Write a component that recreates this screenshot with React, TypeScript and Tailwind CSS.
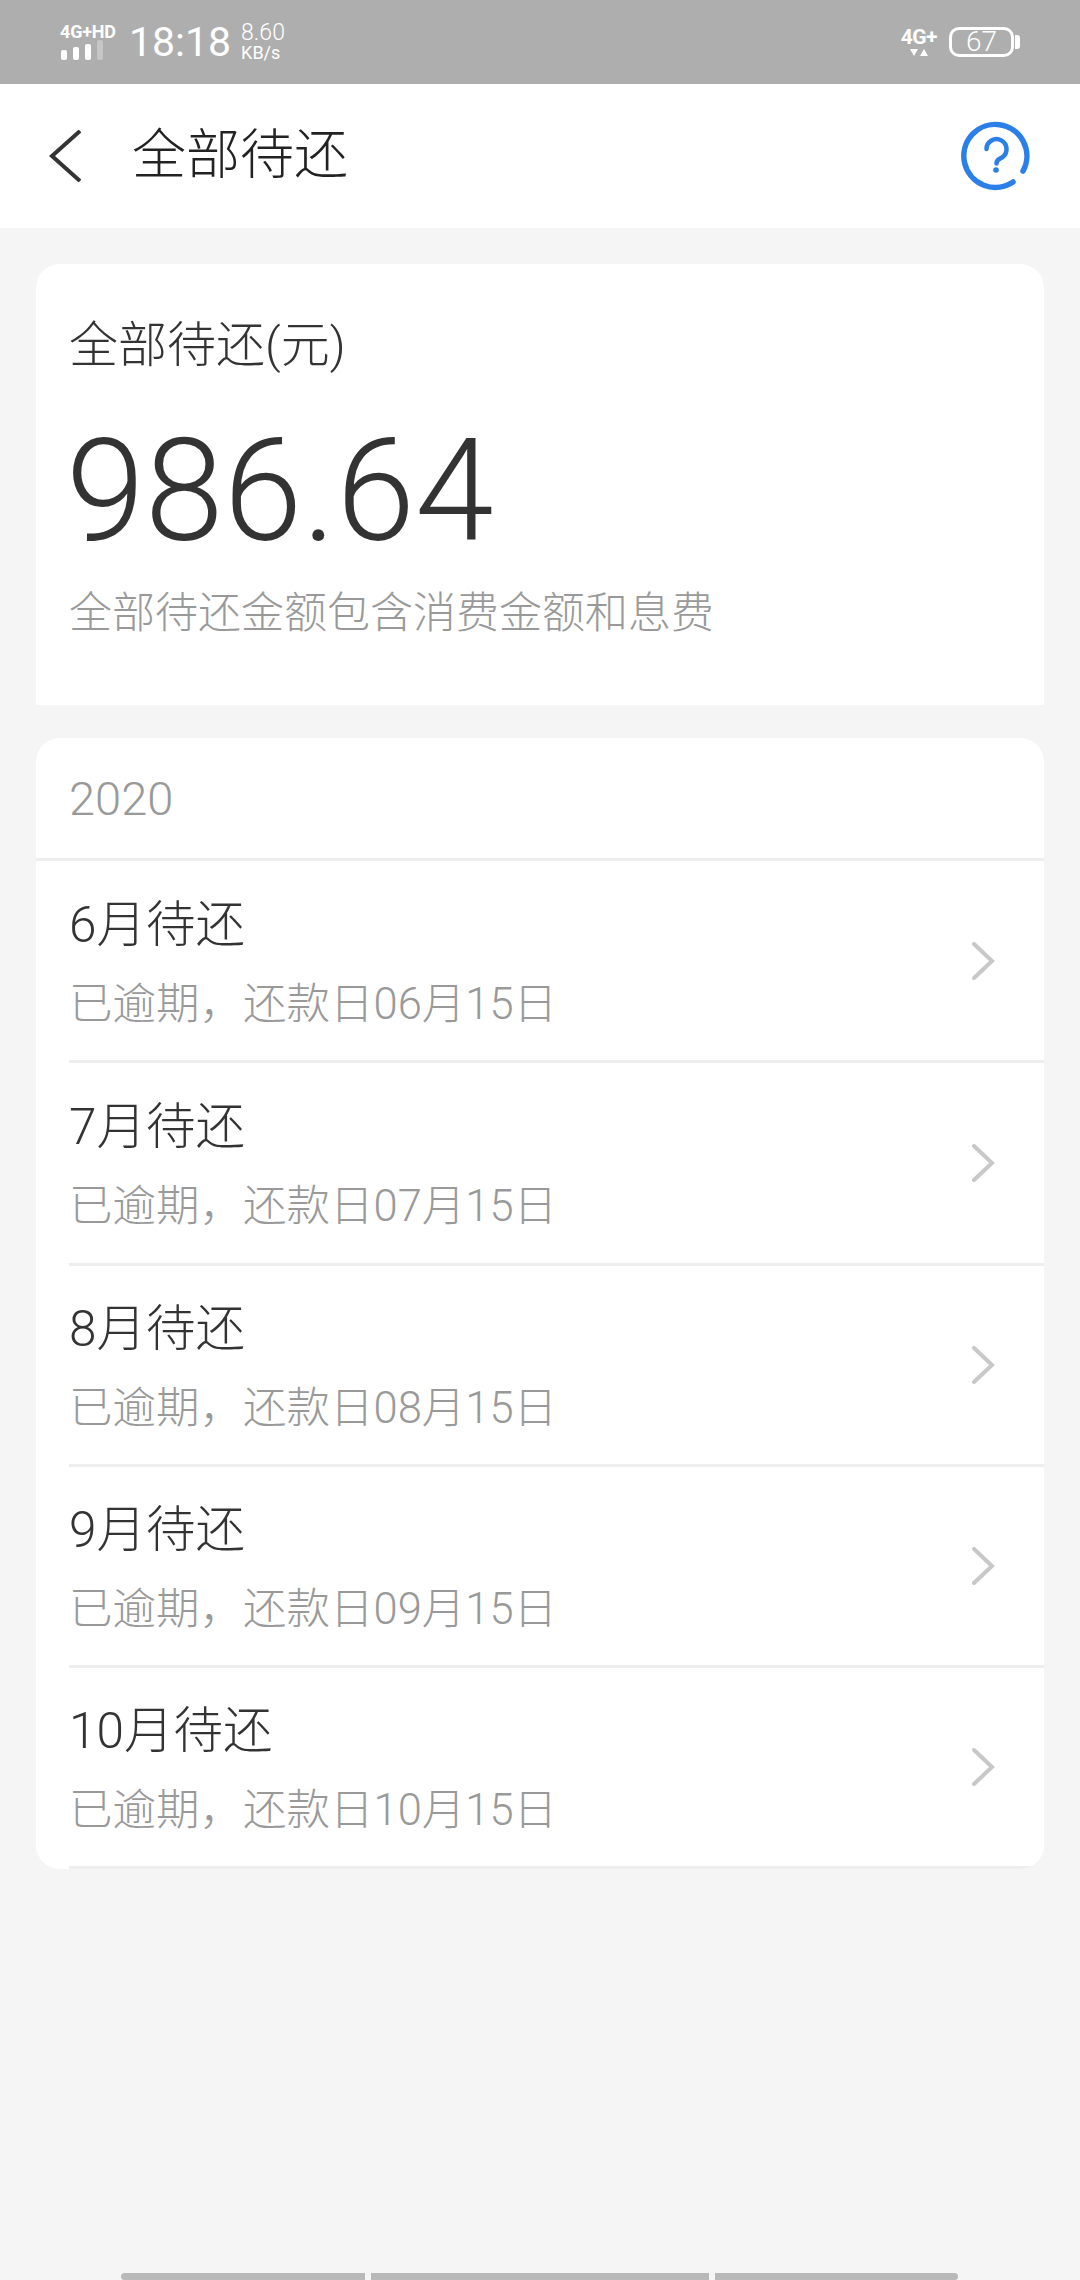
const cjk = "font-['Roboto','Noto_Sans_CJK_SC',sans-serif]";

const months = [
  { title: "6月待还", due: "已逾期，还款日06月15日", height: "h-[202px]" },
  { title: "7月待还", due: "已逾期，还款日07月15日", height: "h-[203px]" },
  { title: "8月待还", due: "已逾期，还款日08月15日", height: "h-[201px]" },
  { title: "9月待还", due: "已逾期，还款日09月15日", height: "h-[201px]" },
  { title: "10月待还", due: "已逾期，还款日10月15日", height: "h-[201px]" },
];

const StatusBar = () => (
  <div className="flex h-[84px] items-center justify-between bg-[#aeaeae] pl-[60px] pr-[60px] text-white">
    <div className="flex items-center">
      <div className="flex w-[58px] flex-col">
        <span className="whitespace-nowrap text-[18px] leading-[15px] font-bold tracking-[-0.2px] font-['Roboto',sans-serif]">4G+HD</span>
        <div className="mt-[1px] flex h-[20px] items-end gap-[6px] pl-[1px]">
          <div className="h-[10px] w-[6px] rounded-[2px] bg-white" />
          <div className="h-[13px] w-[6px] rounded-[2px] bg-white" />
          <div className="h-[16px] w-[6px] rounded-[2px] bg-white" />
          <div className="h-[20px] w-[6px] rounded-[2px] bg-[#c6c6c6]" />
        </div>
      </div>
      <span className="ml-[11px] text-[41px] leading-none font-['Roboto',sans-serif]">18:18</span>
      <div className="ml-[10px] flex flex-col font-['Roboto',sans-serif]">
        <span className="text-[23px] leading-[22px] font-light">8.60</span>
        <span className="text-[18px] leading-[18px]">KB/s</span>
      </div>
    </div>
    <div className="flex items-center">
      <div className="flex flex-col items-center">
        <span className="text-[21px] leading-[18px] font-bold tracking-[-0.5px] font-['Roboto',sans-serif]">4G+</span>
        <svg width="20" height="9" viewBox="0 0 20 9" className="mt-[2px]">
          <path d="M1 1h8L5 8zM11 8h8l-4-7z" fill="#fff" />
        </svg>
      </div>
      <div className="ml-[12px] flex items-center">
        <div className="flex h-[30px] w-[65px] items-center justify-center rounded-[10px] border-[3px] border-white text-[28px] leading-none font-light font-['Roboto',sans-serif]">
          67
        </div>
        <div className="ml-[1px] h-[14px] w-[5px] rounded-r-[3px] bg-white" />
      </div>
    </div>
  </div>
);

const NavBar = () => (
  <div className="flex h-[144px] items-center justify-between bg-white pl-[49px] pr-[48px]">
    <div className="flex items-center">
      <svg width="32" height="52" viewBox="0 0 32 52" fill="none" stroke="#333" strokeWidth="4">
        <path d="M31 1L3 26l28 25" />
      </svg>
      <span className={`ml-[51px] text-[54px] leading-none font-light text-[#222] ${cjk}`}>全部待还</span>
    </div>
    <svg width="72" height="72" viewBox="0 0 72 72" fill="none" stroke="#2a7fe8" strokeWidth="5.500" strokeLinecap="round">
      <path d="M53 62A31.500 31.500 0 1 1 63 51" />
      <path d="M26.500 29a10 10 0 1 1 15.500 8.500c-3.500 2-5.500 2.500-5.500 6" strokeWidth="4.500" />
      <circle cx="36" cy="50" r="2.800" fill="#2a7fe8" stroke="none" />
    </svg>
  </div>
);

const Chevron = () => (
  <svg width="24" height="38" viewBox="0 0 24 38" fill="none" stroke="#c8c8c8" strokeWidth="4" strokeLinecap="round">
    <path d="M2 2l18 17L2 36" />
  </svg>
);

export default function App() {
  return (
    <div className={`flex min-h-[2280px] w-[1080px] flex-col bg-[#f5f5f5] ${cjk}`}>
      <StatusBar />
      <NavBar />

      <div className="mx-[36px] mt-[36px] h-[441px] rounded-t-[24px] bg-white pl-[33px]">
        <div className="pt-[52px] text-[49px] leading-[60px] font-light text-[#333]">全部待还(元)</div>
        <div className="mt-[41px] -ml-[3px] text-[142px] leading-[150px] font-light text-[#333]">986.64</div>
        <div className="mt-[16px] text-[43px] leading-[60px] font-light text-[#999]">全部待还金额包含消费金额和息费</div>
      </div>

      <div className="mx-[36px] mt-[33px] overflow-hidden rounded-[24px] bg-white">
        <div className="flex h-[120px] items-center pl-[33px] pt-[2px] text-[47px] font-light text-[#999]">2020</div>
        <div className="h-[3px] bg-[#eeeeee]" />
        {months.map((m) => (
          <div key={m.title} className={`ml-[33px] flex items-center justify-between border-b-[3px] border-[#eeeeee] pr-[48px] ${m.height}`}>
            <div className="flex flex-col pt-[8px]">
              <span className="text-[49.500px] leading-[60px] font-light text-[#333]">{m.title}</span>
              <span className="mt-[20px] text-[43.500px] leading-[60px] font-light text-[#999]">{m.due}</span>
            </div>
            <Chevron />
          </div>
        ))}
      </div>

      <div className="mt-auto flex h-[7px] justify-center gap-[6px] pr-[2px]">
        <div className="w-[244px] rounded-tl-[4px] rounded-bl-[4px] bg-[#b9b9b9]" />
        <div className="w-[338px] bg-[#b9b9b9]" />
        <div className="w-[243px] rounded-tr-[4px] rounded-br-[4px] bg-[#b9b9b9]" />
      </div>
    </div>
  );
}
